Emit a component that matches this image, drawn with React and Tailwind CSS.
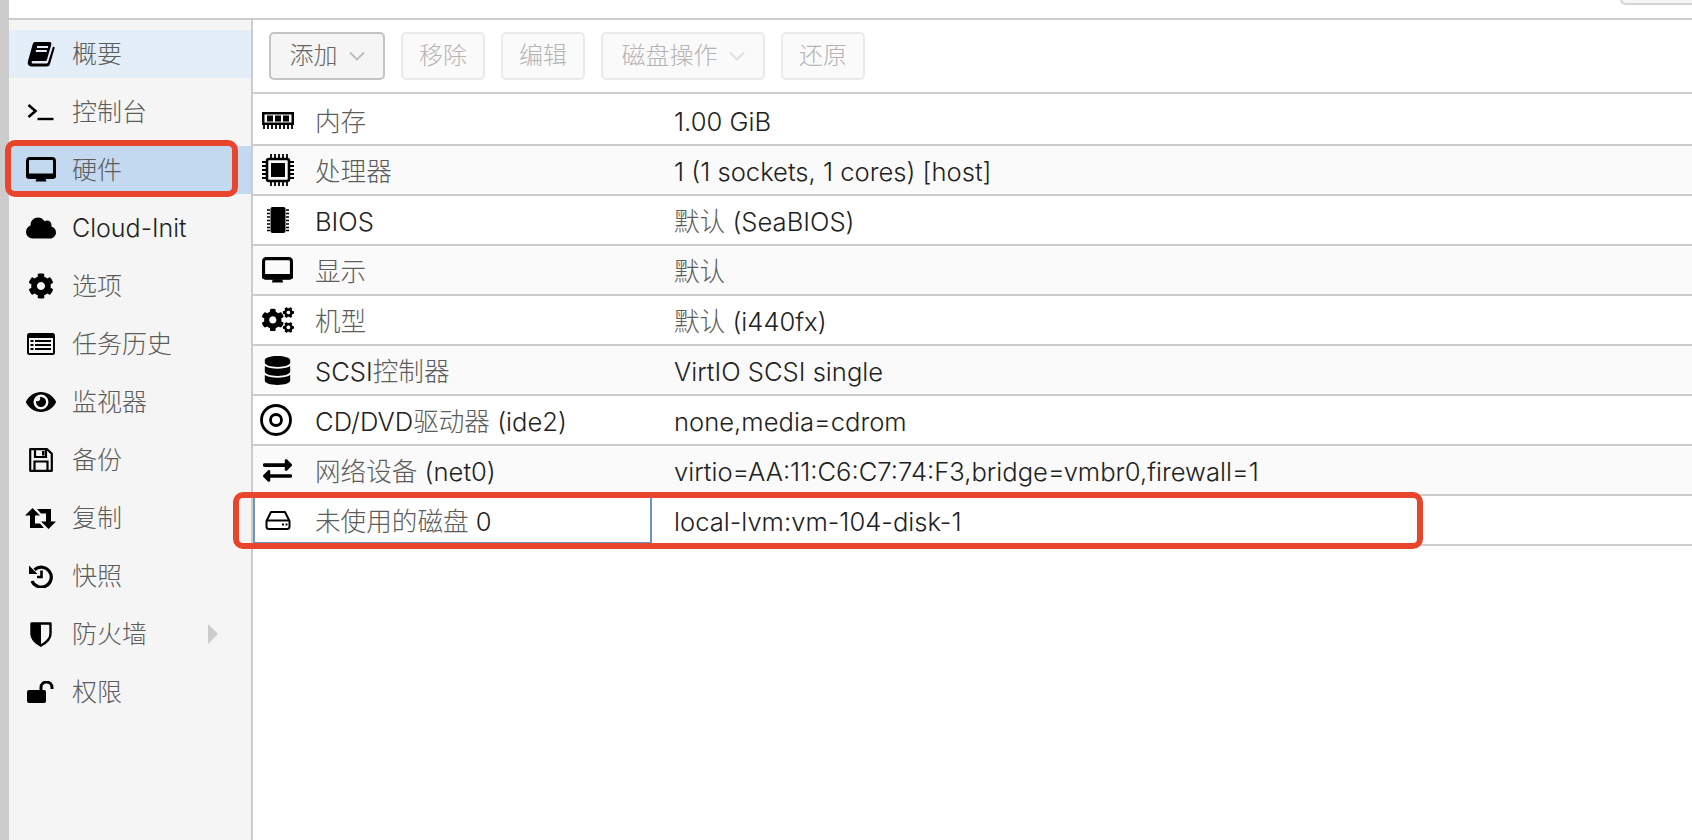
import React from "react";
import { FaCloud, FaCog, FaEye, FaCogs, FaDatabase, FaExchangeAlt } from "react-icons/fa";

const Book = () => (
  <svg width="28" height="26" viewBox="0 0 28 26" fill="none">
    <path d="M8 1h14.500c1.500 0 2.200 1 1.800 2.500L20 18.500c-.3 1-.8 1.500-2 1.500H6c-2 0-2 2.500 0 2.500h13c1.200 0 1.800-.5 2.200-1.800L26 5.500l1.800 1L23 23c-.5 1.800-1.800 2.500-3.500 2.500H5C1.500 25.500.2 23 1 20L5.500 4C6 2.200 6.800 1 8 1z" fill="#000" />
    <path d="M10 6h11M8.800 10h11" stroke="#e3eef8" strokeWidth="2" />
  </svg>
);
const Terminal = () => (
  <svg width="28" height="18" viewBox="0 0 28 18" fill="none">
    <path d="M1.500 2l7 6-7 6" stroke="#000" strokeWidth="2.600" />
    <path d="M10.500 16h16" stroke="#000" strokeWidth="2.400" />
  </svg>
);
const Monitor = ({ w = 30, h = 26 }) => (
  <svg width={w} height={h} viewBox="0 0 30 26" fill="none">
    <rect x="1.500" y="1.500" width="27" height="19" rx="2.500" stroke="#000" strokeWidth="3" />
    <rect x="0" y="16.500" width="30" height="5" rx="2" fill="#000" />
    <path d="M10.500 21.500h9l1 3H9.500z" fill="#000" />
  </svg>
);
const ListAlt = () => (
  <svg width="28" height="22" viewBox="0 0 28 22" fill="none">
    <rect x="0" y="0" width="28" height="22" rx="2.500" fill="#000" />
    <rect x="2" y="5" width="24" height="15" fill="#f5f5f5" />
    <path d="M3.500 7h3v2h-3zM3.500 11h3v2h-3zM3.500 15h3v2h-3zM8 7h16v2H8zM8 11h16v2H8zM8 15h16v2H8z" fill="#000" />
  </svg>
);
const Floppy = () => (
  <svg width="24" height="24" viewBox="0 0 24 24" fill="none">
    <path d="M1.200 1.200h17l4.600 4.600v17H1.200z" stroke="#000" strokeWidth="2.200" strokeLinejoin="round" />
    <path d="M6 1.500v7.500h11V1.500" stroke="#000" strokeWidth="2.200" />
    <path d="M13 3h2.500v4.500H13z" fill="#000" />
    <path d="M5.500 22.500V13.500h13v9" stroke="#000" strokeWidth="2.200" />
  </svg>
);
const Retweet = () => (
  <svg width="31" height="21" viewBox="0 0 31 21" fill="none">
    <path d="M7.500 0L15 7.500h-5v8h5l4 4.500H5V7.500H0z" fill="#000" />
    <path d="M23.500 21L16 13.500h5v-8h-5L12 1h14v12.500h5z" fill="#000" />
  </svg>
);
const History = () => (
  <svg width="24" height="24" viewBox="0 0 24 24" fill="none">
    <path d="M5.500 5.800A10 10 0 1 1 3 17" stroke="#000" strokeWidth="3.200" />
    <path d="M0 1.500l8.500 8.500H0z" fill="#000" />
    <path d="M12.500 6.500v6.500H8" stroke="#000" strokeWidth="2.600" />
  </svg>
);
const ShieldHalf = () => (
  <svg width="22" height="25" viewBox="0 0 22 25" fill="none">
    <path d="M1.500 1.500h19V12c0 5.500-5 9-9.500 11.500C6.500 21 1.500 17.500 1.500 12z" stroke="#000" strokeWidth="2.400" strokeLinejoin="round" />
    <path d="M1 1h10v24C6 22 1 18 1 12z" fill="#000" />
  </svg>
);
const Unlock = () => (
  <svg width="27" height="22" viewBox="0 0 27 22" fill="none">
    <rect x="0" y="9" width="19" height="13" rx="2" fill="#000" />
    <path d="M14 10V6.500a5.500 5.500 0 0 1 11 0V8" stroke="#000" strokeWidth="3" />
  </svg>
);
const Memory = () => (
  <svg width="32" height="17" viewBox="0 0 32 17" fill="none">
    <rect x="0" y="0" width="32" height="13" fill="#000" />
    <rect x="2.500" y="2.500" width="27" height="8" fill="#fff" />
    <path d="M5 3.500h6v6H5zM13 3.500h6v6h-6zM21 3.500h6v6h-6z" fill="#000" />
    <path d="M2 13v4M6 13v4M10 13v4M14 13v4M18 13v4M22 13v4M26 13v4M30 13v4" stroke="#000" strokeWidth="1.800" />
  </svg>
);
const Cpu = () => (
  <svg width="32" height="32" viewBox="0 0 32 32" fill="none">
    <rect x="5" y="5" width="22" height="22" rx="2" stroke="#000" strokeWidth="2.600" />
    <rect x="9" y="9" width="14" height="14" fill="#000" />
    <path d="M9 0v4M13 0v4M17 0v4M21 0v4M25 0v4M9 28v4M13 28v4M17 28v4M21 28v4M25 28v4M0 8h4M0 12h4M0 16h4M0 20h4M0 24h4M28 8h4M28 12h4M28 16h4M28 20h4M28 24h4" stroke="#000" strokeWidth="1.800" />
  </svg>
);
const Chip = () => (
  <svg width="24" height="26" viewBox="0 0 24 26" fill="none">
    <rect x="4.500" y="0" width="15" height="26" rx="2" fill="#000" />
    <path d="M1 3h3M1 6.500h3M1 10h3M1 13.500h3M1 17h3M1 20.500h3M1 23.500h3M20 3h3M20 6.500h3M20 10h3M20 13.500h3M20 17h3M20 20.500h3M20 23.500h3" stroke="#000" strokeWidth="1.500" />
  </svg>
);
const Disc = () => (
  <svg width="32" height="32" viewBox="0 0 32 32" fill="none" className="-ml-1">
    <circle cx="16" cy="16" r="14.500" stroke="#000" strokeWidth="2.800" />
    <circle cx="16" cy="16" r="5.500" stroke="#000" strokeWidth="2.800" />
  </svg>
);
const Hdd = () => (
  <svg width="26" height="20" viewBox="0 0 26 20" fill="none">
    <path d="M6 2h14l4.500 9v5.500A2.500 2.500 0 0 1 22 19H4a2.500 2.500 0 0 1-2.500-2.500V11z" stroke="#000" strokeWidth="2" strokeLinejoin="round" />
    <path d="M2 10.500h22" stroke="#000" strokeWidth="2" />
    <path d="M17 14.500h2M20.500 14.500h2" stroke="#000" strokeWidth="2" />
  </svg>
);
const Chevron = ({ className }) => (
  <svg width="16" height="10" viewBox="0 0 16 10" fill="none" className={className}>
    <path d="M1 1.500l7 7 7-7" stroke="currentColor" strokeWidth="1.800" />
  </svg>
);

// The reference's CJK face is a thin one; the installed CJK face has one weight, so it is lightened by colour.
function T({ children, cjk = "text-[#5c5c5c]" }) {
  const parts = children.split(/([\u4e00-\u9fff]+)/);
  return (
    <>
      {parts.map((p, i) =>
        i % 2 === 1 ? (
          <span key={i} className={cjk}>{p}</span>
        ) : (
          <span key={i}>{p}</span>
        )
      )}
    </>
  );
}

const nav = [
  ["概要", <Book />, "hover"],
  ["控制台", <Terminal />],
  ["硬件", <Monitor />, "active"],
  ["Cloud-Init", <FaCloud size={30} />],
  ["选项", <FaCog size={26} />],
  ["任务历史", <ListAlt />],
  ["监视器", <FaEye size={30} />],
  ["备份", <Floppy />],
  ["复制", <Retweet />],
  ["快照", <History />],
  ["防火墙", <ShieldHalf />, "arrow"],
  ["权限", <Unlock />],
];

const rows = [
  [<Memory />, "内存", "1.00 GiB"],
  [<Cpu />, "处理器", "1 (1 sockets, 1 cores) [host]"],
  [<Chip />, "BIOS", "默认 (SeaBIOS)"],
  [<Monitor w={31} h={27} />, "显示", "默认"],
  [<FaCogs size={32} />, "机型", "默认 (i440fx)"],
  [<FaDatabase size={29} />, "SCSI控制器", "VirtIO SCSI single"],
  [<Disc />, "CD/DVD驱动器 (ide2)", "none,media=cdrom"],
  [<FaExchangeAlt size={29} />, "网络设备 (net0)", "virtio=AA:11:C6:C7:74:F3,bridge=vmbr0,firewall=1"],
  [<Hdd />, "未使用的磁盘 0", "local-lvm:vm-104-disk-1"],
];

const fontStack = { fontFamily: '"Inter", "Noto Sans CJK SC", sans-serif' };

function TbButton({ children, w, primary, chevron }) {
  return (
    <div
      className={
        "flex h-12 items-center justify-center gap-[11px] rounded-[5px] border-2 text-[24px] " +
        w + " " +
        (primary ? "border-[#c4c4c4] bg-[#f5f5f5] text-[#666]" : "border-[#eaeaea] bg-[#fafafa] text-[#b4b4b4]")
      }
    >
      <span>{children}</span>
      {chevron && <Chevron className={primary ? "text-[#bbb]" : "text-[#ddd]"} />}
    </div>
  );
}

export default function App() {
  return (
    <div className="relative flex h-[840px] w-[1692px] overflow-hidden bg-white font-light text-[#222]" style={fontStack}>
      <div className="w-[9px] shrink-0 bg-[#cccccc]" />
      <div className="flex min-w-0 flex-1 flex-col">
        <div className="flex h-5 shrink-0 justify-end overflow-hidden border-b-2 border-[#cccccc]">
          <div className="mt-[-20px] h-[25px] w-[72px] rounded-bl-[6px] border-b-2 border-l-2 border-[#d4d4d4] bg-[#f5f5f5]" />
        </div>
        <div className="flex min-h-0 flex-1">
          <aside className="flex w-[244px] shrink-0 flex-col gap-[10px] border-r-2 border-[#cccccc] bg-[#f5f5f5] pt-[10px]">
            {nav.map(([label, icon, state]) => (
              <div
                key={label}
                className={
                  "flex h-12 shrink-0 items-center " +
                  (state === "hover" ? "bg-[#e3eef8] " : state === "active" ? "bg-[#c3d9f0] " : "")
                }
              >
                <div className="flex w-[63px] shrink-0 items-center justify-center text-black">{icon}</div>
                <span className="text-[25px] leading-none"><T>{label}</T></span>
                {state === "arrow" && (
                  <div className="ml-auto mr-[33px] h-0 w-0 border-y-[10px] border-l-[10px] border-y-transparent border-l-[#cccccc]" />
                )}
              </div>
            ))}
          </aside>
          <main className="flex min-w-0 flex-1 flex-col">
            <div className="flex h-[74px] shrink-0 items-start gap-4 border-b-2 border-[#cccccc] pl-4 pt-3">
              <TbButton w="w-[116px]" primary chevron>添加</TbButton>
              <TbButton w="w-[84px]">移除</TbButton>
              <TbButton w="w-[84px]">编辑</TbButton>
              <TbButton w="w-[164px]" chevron>磁盘操作</TbButton>
              <TbButton w="w-[84px]">还原</TbButton>
            </div>
            <div className="flex flex-col pt-[2px]">
              {rows.map(([icon, label, value], i) => {
                const selected = i === rows.length - 1;
                return (
                  <div
                    key={label}
                    className={
                      "flex h-[50px] shrink-0 items-center border-b-2 border-[#cccccc] text-[25.6px] " +
                      (i % 2 === 1 ? "bg-[#fafafa]" : "bg-white")
                    }
                  >
                    <div
                      className={
                        "flex h-full w-[399px] shrink-0 items-center " +
                        (selected ? "outline-2 -outline-offset-2 outline-[#6a95c4]" : "")
                      }
                    >
                      <div className="flex w-[62px] shrink-0 items-center justify-center pr-[13px] text-black">{icon}</div>
                      <span className="whitespace-nowrap pt-1"><T>{label}</T></span>
                    </div>
                    <span className="whitespace-nowrap pl-[22px] pt-1"><T>{value}</T></span>
                  </div>
                );
              })}
            </div>
          </main>
        </div>
      </div>
      <div className="pointer-events-none absolute left-[5px] top-[140px] h-[57px] w-[233px] rounded-[10px] border-[6px] border-[#e8452c]" />
      <div className="pointer-events-none absolute left-[233px] top-[492px] h-[57px] w-[1190px] rounded-[10px] border-[6px] border-[#e8452c]" />
    </div>
  );
}
